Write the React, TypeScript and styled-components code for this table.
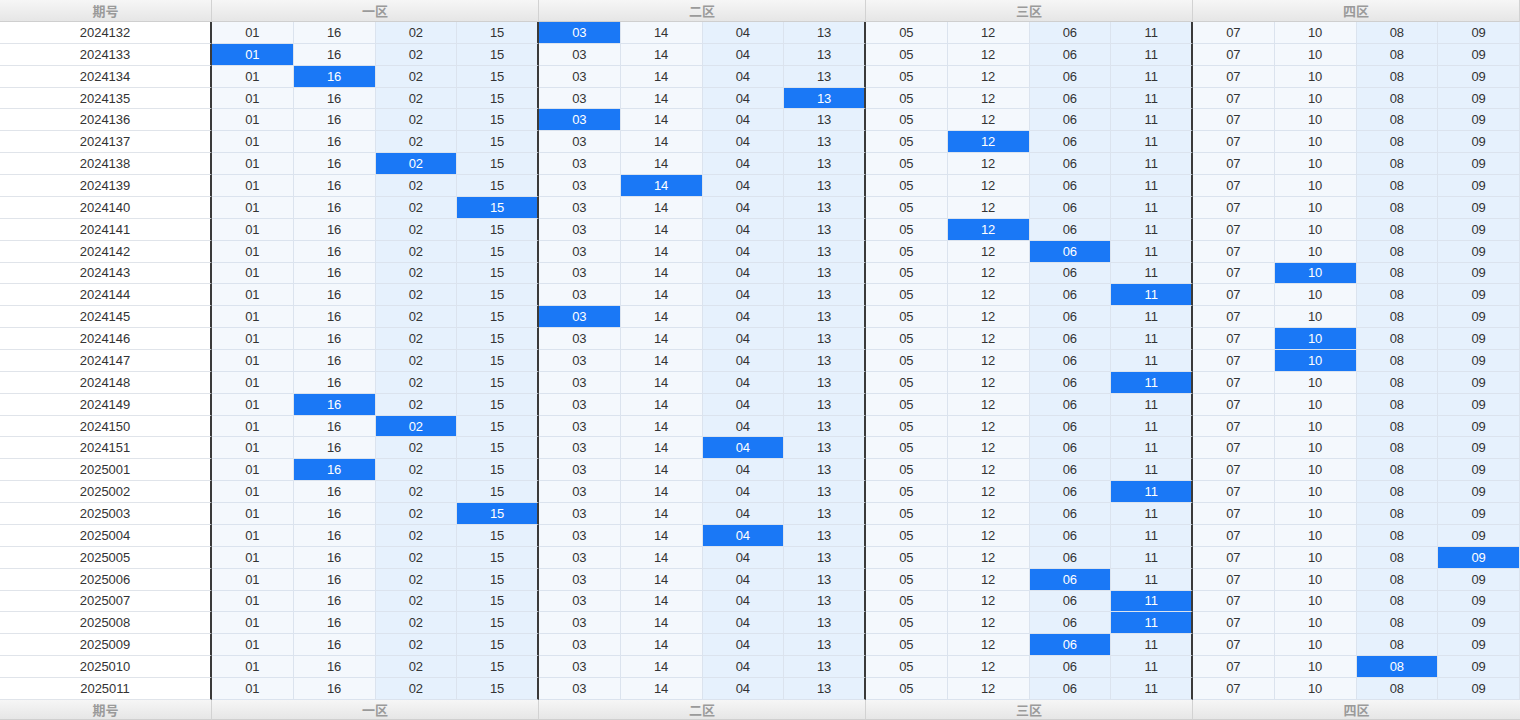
import React from 'react';
import styled, { createGlobalStyle } from 'styled-components';

const ZONES = ['一区', '二区', '三区', '四区'];
const NUMBERS = [
  '01', '16', '02', '15',
  '03', '14', '04', '13',
  '05', '12', '06', '11',
  '07', '10', '08', '09',
];

// period -> index of the hit column (-1 = none)
const ROWS: [string, number][] = [
  ['2024132', 4],
  ['2024133', 0],
  ['2024134', 1],
  ['2024135', 7],
  ['2024136', 4],
  ['2024137', 9],
  ['2024138', 2],
  ['2024139', 5],
  ['2024140', 3],
  ['2024141', 9],
  ['2024142', 10],
  ['2024143', 13],
  ['2024144', 11],
  ['2024145', 4],
  ['2024146', 13],
  ['2024147', 13],
  ['2024148', 11],
  ['2024149', 1],
  ['2024150', 2],
  ['2024151', 6],
  ['2025001', 1],
  ['2025002', 11],
  ['2025003', 3],
  ['2025004', 6],
  ['2025005', 15],
  ['2025006', 10],
  ['2025007', 11],
  ['2025008', 11],
  ['2025009', 10],
  ['2025010', 14],
  ['2025011', -1],
];

const GlobalStyle = createGlobalStyle`
  html, body {
    margin: 0;
    padding: 0;
    background: #fff;
    font-family: "Liberation Sans", Arial, "Noto Sans CJK SC", sans-serif;
  }
`;

export default function App() {
  const headerRow = (key: string) => (
    <React.Fragment key={key}>
      <HeadCell>期号</HeadCell>
      {ZONES.map(z => (
        <HeadCell key={key + z} span={4}>
          {z}
        </HeadCell>
      ))}
    </React.Fragment>
  );

  return (
    <>
      <GlobalStyle />
      <Grid>
        {headerRow('top')}
        {ROWS.map(([period, hit]) => (
          <React.Fragment key={period}>
            <PeriodCell>{period}</PeriodCell>
            {NUMBERS.map((n, i) => (
              <NumCell
                key={period + '-' + i}
                shade={i % 4 >= 2}
                zoneEnd={i % 4 === 3 && i !== 15}
                active={hit === i}
              >
                {n}
              </NumCell>
            ))}
          </React.Fragment>
        ))}
        {headerRow('bottom')}
      </Grid>
    </>
  );
}

const Grid = styled.div`
  display: grid;
  grid-template-columns: 212px repeat(16, 1fr);
  grid-template-rows: 22px repeat(30, 1fr) 22px;
  width: 1520px;
  height: 720px;
  font-size: 13px;
  color: #333;
`;

const HeadCell = styled.div<{ span?: number }>`
  grid-column: span ${p => p.span || 1};
  display: flex;
  align-items: center;
  justify-content: center;
  background: linear-gradient(#f6f6f6, #e6e6e6);
  border-right: 1px solid #d2d2d2;
  border-bottom: 1px solid #cfcfcf;
  color: #9a9a9a;
  font-weight: bold;
  box-sizing: border-box;

  &:last-child {
    border-right: none;
  }
`;

const PeriodCell = styled.div`
  display: flex;
  align-items: center;
  justify-content: center;
  background: #fff;
  border-bottom: 1px solid #e0e4ea;
  border-right: 2px solid #3a3a3a;
  box-sizing: border-box;
`;

const NumCell = styled.div<{ shade: boolean; zoneEnd: boolean; active: boolean }>`
  display: flex;
  align-items: center;
  justify-content: center;
  box-sizing: border-box;
  background: ${p => (p.active ? '#1a78f6' : p.shade ? '#e6f1fd' : '#f4f8fd')};
  color: ${p => (p.active ? '#fff' : '#333')};
  border-bottom: 1px solid #dbe3ee;
  border-right: ${p => (p.zoneEnd ? '2px solid #3a3a3a' : '1px solid #dbe3ee')};
`;
